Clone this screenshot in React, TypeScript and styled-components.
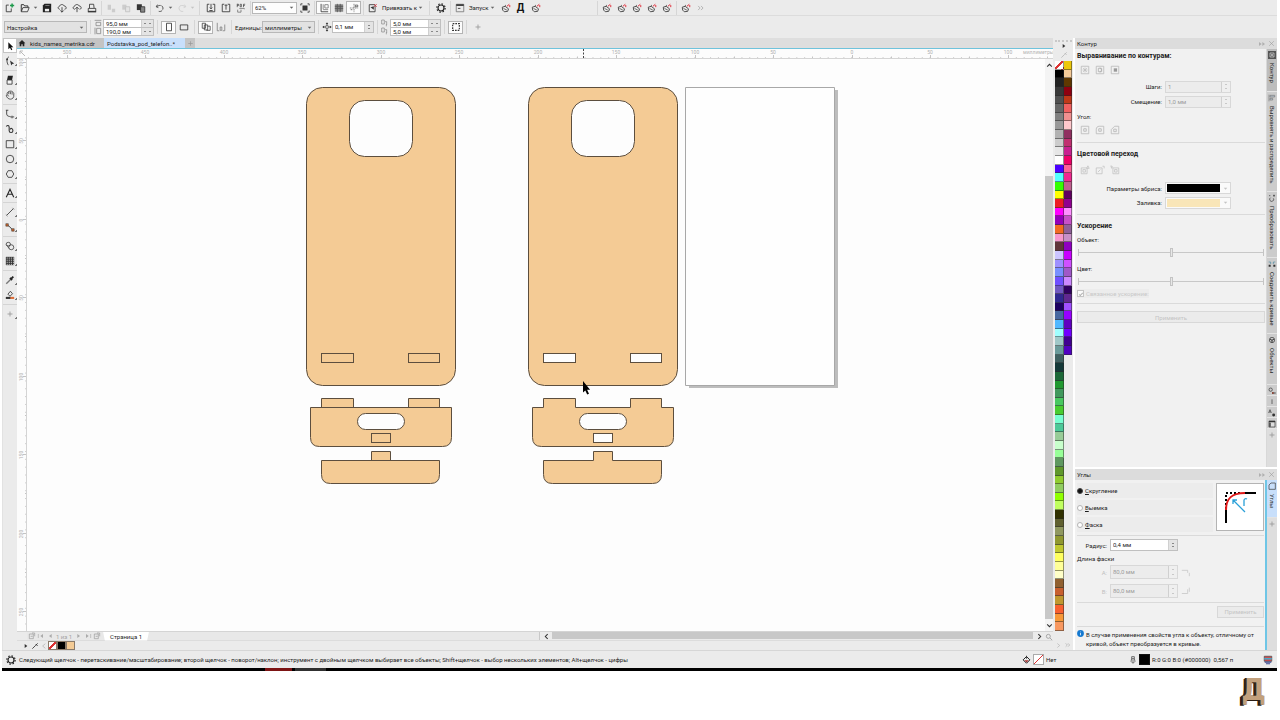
import React from "react";
import styled, { createGlobalStyle, css } from "styled-components";

const Global = createGlobalStyle`
  *, *::before, *::after { box-sizing: border-box; }
  body { margin: 0; background: #fff; }
  body, button, input, select {
    font-family: Roboto, "Open Sans", sans-serif;
    font-size: 6px;
    line-height: 9px;
    color: #1c1c1c;
  }
  button, input, select { margin: 0; padding: 0; border: 0; border-radius: 0; background: none; }
  button { cursor: pointer; }
`;

/* ---------- icons ---------- */

const K = "#333";
const G = "#777";
const R = "#e0303c";

const art: Record<string, React.ReactNode> = {
  newDoc: <><path d="M4.500 2.500H1.500v8h6V6.500" stroke={K} /><path d="M6 3h5M8.500 .5v5" stroke="#1f9a4c" strokeWidth="1.800" /></>,
  open: <><path d="M1.500 10V2h3l1 1.500h4V5" stroke={K} strokeWidth="1.200" /><path d="M1.500 10.500L3.500 5.500h7.500l-2 5z" stroke={K} /></>,
  save: <><path d="M3 1h8v10H1V3z" fill="#222" /><path d="M4 3h5" stroke="#888" /><path d="M3.500 7h5v3h-5z" fill="#eee" /></>,
  cloudDown: <><path d="M3.500 7.500C1 7.500.5 4.500 3 4 3.500 1.500 7.500 1 8.500 3.500 11.500 3.500 12 7.500 9 7.500" stroke={K} /><path d="M6 5v6M4 9l2 2 2-2" stroke={K} /></>,
  cloudUp: <><path d="M3.500 7.500C1 7.500.5 4.500 3 4 3.500 1.500 7.500 1 8.500 3.500 11.500 3.500 12 7.500 9 7.500" stroke={K} /><path d="M6 11V5M4 7l2-2 2 2" stroke={K} /></>,
  print: <><path d="M3 6V1.500h5l.5 4.500M1.500 6.500h9v3.500h-9z" stroke={K} /><path d="M1 10.500h10" stroke={K} strokeWidth="1.500" /></>,
  cut: <><path d="M2 2h4v6H2zM7 7h4v4H7z" fill="#ccc" /></>,
  copy: <><path d="M1.500 2h5v6h-5z" fill="#ccc" /><path d="M5.500 4.500h5v6h-5z" fill="#e4e4e4" stroke="#c0c0c0" /></>,
  paste: <><path d="M1 1.500h6v7H1z" fill={K} /><path d="M5.500 4.500h5v6.500h-5z" fill="#888" stroke={K} /></>,
  undo: <><path d="M3 2L1.500 4.500 4 5.500" stroke={K} /><path d="M2 4.500C6 1.500 10 3 9.500 7 9 10 6 10.500 4.500 10" stroke={K} strokeDasharray="5 1.200" /></>,
  redo: <><path d="M9 2l1.500 2.500L8 5.500" stroke="#ccc" /><path d="M10 4.500C6 1.500 2 3 2.500 7 3 10 6 10.500 7.500 10" stroke="#ccc" /></>,
  importI: <><path d="M4 1.500H1.500v9h9v-9H8" stroke={K} /><path d="M6 1v6M4.500 5.500L6 7l1.500-1.500M4 9h4" stroke={K} /></>,
  exportI: <><path d="M4 1.500H1.500v9h9v-9H8" stroke={K} /><path d="M6 8V2M4.500 3.500L6 2l1.500 1.500" stroke={K} /></>,
  pdf: <><path d="M1.500 1v4M1.500 1.500H3v1.500H1.500M5 1.500v3h1.500v-3zM9 5V1.500h2M9 3h1.500" stroke={K} strokeWidth=".8" /><path d="M4 6.500h6v1M2 8v3h4V8" stroke={G} /></>,
  full: <><path d="M3 3h6v6H3z" fill={K} /><path d="M1 3V1h2M9 1h2v2M11 9v2H9M3 11H1V9" stroke={K} /></>,
  rulers: <><path d="M2.500 1v9.500H11" stroke={K} /><path d="M5 1.500v6M7 2h4v4H7zM5 8h6" stroke={G} /></>,
  gridI: <><path d="M1 1.500h10v9H1z" fill="#888" /><path d="M1 4h10M1 6.500h10M4 1v10M7.500 1v10" stroke="#555" /></>,
  guides: <><path d="M6 1v10M1 6h10" stroke={G} strokeDasharray="2 1" /><path d="M7.500 2.500h3v2h-3zM2 8h2" stroke={K} strokeWidth=".8" /></>,
  snapOff: <><path d="M1.500 2h7v8.500h-7z" stroke={K} /><path d="M3 5l4 3V4z" fill={K} /><path d="M7.500 1.500l3 3M10.500 1.500l-3 3" stroke={R} /></>,
  gear: <><circle cx="6" cy="6" r="3.600" stroke="#222" strokeWidth="1.400" /><circle cx="6" cy="6" r="5" stroke="#222" strokeWidth="1.400" strokeDasharray="1.800 2.127" /></>,
  launch: <><path d="M1.500 1.500h9v9h-9z" stroke={G} /><path d="M1.500 2.500h9" stroke={K} strokeWidth="2" /><path d="M3.500 6.500h3" stroke={K} /></>,
  macro: <><path d="M1.500 5l3.500-1 4 3-1 3-4 .5-2-2z" stroke={K} /><path d="M3 6.500l4 2M4.500 3.500l1.500-1" stroke={K} strokeWidth=".8" /><path d="M7 4l3-2.500M10.500 2.500v2.500" stroke={R} strokeWidth="1.200" /></>,
  more: <path d="M2.500 3.500L5 6 2.500 8.500M6 3.500L8.500 6 6 8.500" stroke="#aaa" />,
  width: <><path d="M1 2h10M3 5h7v5H3z" stroke={G} /></>,
  height: <><path d="M1.500 1v10M4 2h6v8H4z" stroke={G} /></>,
  portrait: <path d="M3 1.500h6v9H3z" stroke={K} />,
  landscape: <path d="M1.500 3.500h9v6h-9z" stroke={K} />,
  pages: <><path d="M1.500 1.500h4v6h-4zM4 3.500h4v6H4zM8 5h3v5H6.500" stroke={K} strokeWidth=".9" /></>,
  pageOne: <><path d="M1.500 1v9.500H4M5 6h2v4H5zM10.500 3v7.500H8" stroke={G} strokeWidth=".9" /></>,
  nudge: <><path d="M6 1v10M1 6h10" stroke={K} /><path d="M4.500 2.500L6 .5l1.500 2M4.500 9.500L6 11.500l1.500-2M2.500 4.500L.5 6l2 1.500M9.500 4.500l2 1.500-2 1.500" fill={K} /><path d="M4.500 4.500h3v3h-3z" fill="#eee" stroke={K} strokeWidth=".6" /></>,
  dupX: <><path d="M1 1.500h4v6H1zM6 4h2.500v5M8 11V8" stroke={G} strokeWidth=".9" /></>,
  bounds: <path d="M2 2h8v8H2z" stroke={K} strokeWidth="1.400" strokeDasharray="2 1.200" />,
  plus: <path d="M6 3v6M3 6h6" stroke="#999" />,
  pick: <path d="M4 1.500v8.500l2-2 1.500 3 1.300-.7-1.500-2.800H10z" fill="#111" />,
  shape: <><path d="M4.500 1C1.500 3 2 8 4 11" stroke={K} /><path d="M1.500 3h2v2h-2zM6 5.500l5 3.500-2.300.5L7.500 11.500z" fill={K} /></>,
  crop: <><path d="M3.500 1h6l-1 5H2.500z" fill="#222" /><path d="M2.500 6h6v5h-6z" stroke={K} fill="#f5f5f5" /></>,
  pan: <><path d="M2.500 6V3.500M4.500 5V2M6.500 5V2M8.500 5.500V2.500M10.500 6C11 9 9 11 6.500 11 4 11 2 9 1.500 6.500c2-1 3 .5 3 1M2.500 3.500C5 .5 9 .5 10.500 4v2" stroke={K} strokeWidth=".9" /></>,
  freehand: <><path d="M1 1.500h3M2 1.500V6c0 3 3 2.500 5 3.500h4" stroke={K} /><path d="M7.500 8h2v3h-2z" fill={G} /></>,
  artistic: <path d="M1.500 3C3 1 5 1.500 5 4v4c0 3 4.500 3 4.500 0S6.500 4.500 6.500 6.500" stroke={K} strokeWidth="1.300" />,
  rect: <path d="M1.500 2h9v8.500h-9z" stroke={K} />,
  ellipse: <circle cx="6" cy="6" r="4.500" stroke={K} />,
  polygon: <path d="M3.800 2h4.400l2.300 4-2.300 4H3.800L1.500 6z" stroke={K} />,
  text: <path d="M1.500 11L6 1.500 10.500 11M3 7.500h6" stroke="#222" strokeWidth="1.300" />,
  dimension: <><path d="M2 10l8-8" stroke={K} /><path d="M1 9l2 2M9 1l2 2" stroke={G} /></>,
  connector: <><path d="M2.500 3.500L6 6l3 3.500" stroke={K} /><path d="M1 2h3v3H1zM8 8h3v3H8z" fill="#c8642c" stroke={K} strokeWidth=".6" /></>,
  blend: <><ellipse cx="4" cy="3.800" rx="2.600" ry="2.200" stroke={K} strokeWidth=".9" /><circle cx="7.500" cy="7.500" r="3" stroke={K} strokeWidth=".9" /><path d="M1.500 4.500l3.500 4.500" stroke={K} strokeWidth=".8" /></>,
  mesh: <><path d="M1 1h10v10H1z" fill="#333" /><path d="M2 2.500h9M2 5h9M2 7.500h9M2 10h9" stroke="#eee" strokeDasharray="1.200 1.300" strokeWidth="1.200" /></>,
  dropper: <><path d="M1.500 10.500L7 5" stroke={G} strokeWidth="1.600" /><path d="M6 3.500l2.500 2.500M7 5l3-3" stroke="#222" strokeWidth="2.200" /></>,
  fill: <><path d="M3.500 5L6.500 1.500 9 4.500 6 7.500z" stroke={K} /><path d="M1 9.500h6" stroke={K} strokeWidth="2.500" /><path d="M6.500 9.500H11" stroke="#dd6b35" strokeWidth="2.500" /></>,
  home: <path d="M1 6.500L6 1.500l5 5H9.500V11H7V8H5v3H2.500V6.500z" fill="#222" />,
  contour1: <><path d="M1.500 1.500h9v9h-9z" stroke="#bbb" /><path d="M3.500 3.500l5 5M8.500 3.500l-5 5M6 3v6M3 6h6" stroke="#bbb" strokeWidth=".8" /></>,
  contour2: <><path d="M1.500 1.500h9v9h-9z" stroke="#bbb" /><path d="M4 4h4v4H4zM6 3l2 3-2 3" stroke="#b0b0b0" /></>,
  contour3: <><path d="M1.500 1.500h9v9h-9z" stroke="#bbb" /><path d="M4.500 4h4v4h-4z" fill="#999" /></>,
  corner1: <><path d="M1.500 1.500h9v9h-9z" stroke="#bbb" /><path d="M4.500 4.500h3v3h-3z" stroke="#b5b5b5" /></>,
  corner2: <><path d="M1.500 10.500V5C1.500 3 3 1.500 5 1.500h5.500v9z" stroke="#bbb" /><path d="M4.500 4.500h3v3h-3z" stroke="#b5b5b5" /></>,
  corner3: <><path d="M1.500 10.500V5.500l4-4h5v9z" stroke="#bbb" /><path d="M4.500 5h3v3h-3z" stroke="#b5b5b5" /></>,
  color1: <><path d="M1.500 3.500h7v7h-7zM3.500 5.500h3v3h-3zM8 4l1.500-3L11 4z" stroke="#c4c4c4" /></>,
  color2: <><path d="M1.500 3.500h7v7h-7zM3.500 8.500l3-3M9 1.500h2V4" stroke="#c4c4c4" /></>,
  color3: <><path d="M3.500 3.500h7v7h-7zM5.500 5.500h3v3h-3zM1 1l2 1-1 2z" stroke="#c4c4c4" /></>,
  dockContour: <><path d="M0 0h12v12H0z" fill="#555" /><path d="M3 3h6v6H3z" stroke="#ddd" /><path d="M5 5h2v2H5z" fill="#fff" /></>,
  dockAlign: <><path d="M1.500 1v10M3 2h7v2.500H3zM3 6.500h4V9H3z" stroke={G} fill="#b8c4d0" /></>,
  dockTransform: <><path d="M4 5.500a3 3 0 1 0 4 1" stroke={K} /><path d="M1.500 2.500h2M9 1v3M7.500 2.500h3" stroke={K} /></>,
  dockJoin: <><path d="M1 3h3v3M8 6V3h3" stroke="#4a88a0" /><path d="M1 7h3v3H1zM8 7h3v3H8z" fill={K} /></>,
  dockObjects: <><circle cx="6" cy="6" r="4" stroke={K} /><path d="M3 4.500l3 2 3-2M6 6.500V10" stroke={K} strokeWidth="1.500" /></>,
  dockFill: <><circle cx="4" cy="4" r="2.500" stroke={K} /><path d="M6 9h3" stroke="#8c4a3c" strokeWidth="3" /><path d="M8.500 7.500h3v3h-3z" fill="#888" /></>,
  dockLine: <path d="M6 2v7" stroke={K} />,
  dockText: <><path d="M1 6l2-5 2 5M2 4.500h2" stroke={K} /><circle cx="8.500" cy="9" r="2.200" fill={K} /></>,
  dockTable: <><path d="M1.500 1.500h9v9h-9z" stroke={K} fill="#ddd" /><path d="M1.500 2.500h9M3 4v6" stroke={K} strokeWidth="2" /></>,
  dockCorner: <path d="M1.500 11V4.500l3-3h6.500v9.500z" stroke={K} />,
  bevelA: <path d="M1 4h7v3M10 7v4" stroke="#c8c8c8" />,
  bevelB: <path d="M1 9h7V4M10 2v5" stroke="#c8c8c8" />,
  lock: <path d="M2 10L6 3l4 7z" fill="#b0b0b0" />,
  info: <><circle cx="6" cy="6" r="5.800" fill="#1579d0" /><path d="M6 5v4M6 2.800v1" stroke="#fff" strokeWidth="1.300" /></>,
  bucket: <><path d="M1.500 6.500L6 2l4.500 4.500L6 11z" stroke="#222" strokeWidth="1.300" /><path d="M3 7h6L6 10z" fill="#a33" /><path d="M6 1v4" stroke="#222" /></>,
  pen: <><path d="M4 1h4v3H4zM4 4L3 8l3 3 3-3-1-4M6 5v5" stroke={K} /></>,
  monitor: <><path d="M1.500 1.500h9v6h-9z" fill="#d84848" stroke="#555" /><path d="M1.500 4.500h9" stroke="#4aa8c8" strokeWidth="2" /><path d="M2 8.500h8M3.500 10.500h5" stroke="#3b4a90" strokeWidth="1.400" /></>,
  zoomI: <><circle cx="5" cy="5" r="3" stroke="#888" /><path d="M7.500 7.500l3 3" stroke="#888" /></>,
  first: <><path d="M2 3v6" stroke="#aaa" /><path d="M9 3L5 6l4 3z" fill="#aaa" /></>,
  prev: <path d="M8.500 3l-4 3 4 3z" fill="#aaa" />,
  next: <path d="M3.500 3l4 3-4 3z" fill="#aaa" />,
  last: <><path d="M10 3v6" stroke="#aaa" /><path d="M3 3l4 3-4 3z" fill="#aaa" /></>,
  addPage: <><path d="M2 3h6v7H2z" stroke="#999" /><path d="M6 1.500h4v5M4 6.500h3" stroke="#999" /></>,
  flyout: <path d="M4 3l4 3-4 3z" fill="#333" />,
  picker: <path d="M2 10l5-5M7 3l3 3M7 5l3-3" stroke="#333" strokeWidth="1.300" />,
  pickerGrey: <path d="M2 10l5-5M7 3l3 3M7 5l3-3" stroke="#bbb" strokeWidth="1.300" />,
  chevL: <path d="M8 2.500L4 6l4 3.500" stroke="#aaa" />,
  chevR: <path d="M4 2.500L8 6l-4 3.500" stroke="#aaa" />,
  arrL: <path d="M8 2L4 6l4 4" stroke="#333" strokeWidth="1.800" />,
  arrR: <path d="M4 2l4 4-4 4" stroke="#333" strokeWidth="1.800" />,
  arrU: <path d="M2 8l4-4 4 4" stroke="#333" strokeWidth="1.800" />,
  arrD: <path d="M2 4l4 4 4-4" stroke="#333" strokeWidth="1.800" />,
  collapse: <path d="M1.500 3v6l4-3zM6.500 3v6l4-3z" fill="#b0b0b0" />,
  close: <path d="M2 2l8 8M10 2l-8 8" stroke="#999" />,
  caret: <path d="M3 4.500h6L6 8z" fill="#666" />,
  caretGrey: <path d="M3 4.500h6L6 8z" fill="#c4c4c4" />,
};

const Svg = styled.svg`
  display: block;
  flex: none;
`;

function Icon({ name, size = 9 }: { name: string; size?: number }) {
  return (
    <Svg width={size} height={size} viewBox="0 0 12 12" fill="none" aria-hidden="true">
      {art[name]}
    </Svg>
  );
}

/* ---------- frame ---------- */

const Page = styled.div`
  min-height: 100vh;
  display: flex;
  flex-direction: column;
`;

const Window = styled.main`
  flex: 1;
  display: flex;
  flex-direction: column;
  margin: 0 3px 0 2px;
  background: #ebebeb;
`;

const Toolbar = styled.div<{ $h: number }>`
  display: flex;
  align-items: center;
  height: ${(p) => p.$h}px;
  overflow: hidden;
`;

const PropertyBar = styled(Toolbar)`
  border-top: 1px solid #dcdcdc;
  padding-left: 2px;
`;

const IconButton = styled.button<{ $boxed?: boolean }>`
  display: flex;
  align-items: center;
  justify-content: center;
  flex: none;
  width: 15px;
  height: 13px;
  ${(p) => p.$boxed && css`
    background: #fcfcfc;
    box-shadow: inset 0 0 0 1px #b4b4b4;
  `}
`;

const CaretButton = styled.button`
  display: flex;
  align-items: center;
  justify-content: center;
  flex: none;
  width: 7px;
  height: 13px;
`;

const MenuButton = styled.button<{ $w: number }>`
  display: flex;
  align-items: center;
  justify-content: space-between;
  flex: none;
  width: ${(p) => p.$w}px;
  padding: 0 2px;
  white-space: nowrap;
`;

const Letter = styled.b`
  font-size: 10px;
  line-height: 12px;
  color: #111;
`;

const Sep = styled.i<{ $w?: number }>`
  flex: none;
  width: ${(p) => p.$w ?? 4}px;
  height: 14px;
  background: linear-gradient(#d6d6d6, #d6d6d6) center / 1px 100% no-repeat;
`;

const Spacer = styled.i<{ $w: number }>`
  flex: none;
  width: ${(p) => p.$w}px;
`;

const SelectBox = styled.span<{ $w: number; $white?: boolean }>`
  display: flex;
  align-items: center;
  flex: none;
  width: ${(p) => p.$w}px;
  height: 12px;
  padding: 0 1px 0 2px;
  border: 1px solid #b8b8b8;
  background: ${(p) => (p.$white ? "#fdfdfd" : "#e2e2e2")};
  select {
    flex: 1;
    min-width: 0;
    appearance: none;
    outline: 0;
  }
`;

function Select({ label, value, w, white }: { label: string; value: string; w: number; white?: boolean }) {
  return (
    <SelectBox $w={w} $white={white}>
      <select aria-label={label} defaultValue={value}>
        <option>{value}</option>
      </select>
      <Icon name="caret" size={7} />
    </SelectBox>
  );
}

const Field = styled.span<{ $w: number; $h: number; $off?: boolean }>`
  display: flex;
  flex: none;
  width: ${(p) => p.$w}px;
  height: ${(p) => p.$h}px;
  border: 1px solid ${(p) => (p.$off ? "#d8d8d8" : "#c0c0c0")};
  background: ${(p) => (p.$off ? "#ececec" : "#fff")};
  input {
    flex: 1;
    min-width: 0;
    padding: 0 2px;
    line-height: ${(p) => p.$h - 2}px;
    outline: 0;
    color: ${(p) => (p.$off ? "#9a9a9a" : "#1c1c1c")};
  }
`;

const Stepper = styled.i<{ $flat?: boolean; $off?: boolean }>`
  display: flex;
  flex-direction: ${(p) => (p.$flat ? "row" : "column")};
  align-items: center;
  justify-content: space-evenly;
  width: ${(p) => (p.$flat ? 12 : 9)}px;
  border-left: 1px solid #d0d0d0;
  background: ${(p) => (p.$off ? "#efefef" : "#e4e4e4")};
  &::before, &::after {
    content: "";
    width: 2px;
    height: 1px;
    background: ${(p) => (p.$off ? "#c8c8c8" : "#888")};
  }
`;

function NumberField({ id, label, value, w, h, off, flat }: {
  id: string; label?: string; value: string; w: number; h: number; off?: boolean; flat?: boolean;
}) {
  return (
    <Field $w={w} $h={h} $off={off}>
      <input id={id} aria-label={label} type="text" defaultValue={value} disabled={off} />
      <Stepper $flat={flat} $off={off} />
    </Field>
  );
}

const Stack = styled.div`
  display: flex;
  flex-direction: column;
  flex: none;
`;

const StackRow = styled.div`
  display: flex;
  align-items: center;
  gap: 1px;
  height: 8px;
`;

const UnitLabel = styled.span`
  flex: none;
  width: 27px;
  white-space: nowrap;
`;

/* ---------- workspace ---------- */

const Body = styled.div`
  flex: 1;
  display: flex;
  min-height: 0;
`;

const Toolbox = styled.nav`
  display: flex;
  flex-direction: column;
  flex: none;
  width: 15px;
  border-left: 1px solid #e2e2e2;
`;

const Tool = styled.button<{ $active?: boolean }>`
  display: flex;
  align-items: center;
  justify-content: center;
  width: 14px;
  height: 15px;
  background: linear-gradient(135deg, transparent 50%, #777 50%) 12px 11px / 2px 2px no-repeat;
  ${(p) => p.$active && css`
    background: #fff;
    box-shadow: inset 0 0 0 1px #c4c4c4;
  `}
`;

const ToolSep = styled.i`
  height: 4px;
  background: linear-gradient(#d4d4d4, #d4d4d4) center / 100% 1px no-repeat;
`;

const DocumentArea = styled.section`
  flex: 1;
  min-width: 0;
  display: flex;
  flex-direction: column;
`;

const TabStrip = styled.div`
  display: flex;
  height: 10px;
  background: #dedede;
`;

const HomeTab = styled.button`
  display: flex;
  align-items: center;
  justify-content: center;
  width: 10px;
  background: #c4c4c4;
`;

const DocTab = styled.button<{ $active?: boolean; $w: number }>`
  width: ${(p) => p.$w}px;
  padding: 0 3px;
  text-align: left;
  white-space: nowrap;
  background: ${(p) => (p.$active ? "#c8dffb" : "#c4c4c4")};
`;

const RulerTop = styled.div`
  display: flex;
  height: 11px;
  overflow: hidden;
  border-top: 1px solid #6fc3dc;
  border-bottom: 1px solid #d4d4d4;
  background: #fcfcfc;
`;

const CanvasRow = styled.div`
  flex: 1;
  min-height: 0;
  display: flex;
  overflow: hidden;
`;

const RulerLeft = styled.div`
  flex: none;
  width: 10px;
  overflow: hidden;
  border-right: 1px solid #d4d4d4;
  background: #fcfcfc;
`;

const Canvas = styled.div`
  flex: 1;
  min-width: 0;
  overflow: hidden;
  background: #fdfdfd;
`;

const VScroll = styled.div`
  flex: none;
  display: flex;
  flex-direction: column;
  width: 8px;
  background: #f4f4f4;
`;

const ScrollButton = styled.button<{ $w: number }>`
  display: flex;
  align-items: center;
  justify-content: center;
  flex: none;
  width: ${(p) => p.$w}px;
  height: 9px;
`;

const VButton = styled(ScrollButton)`
  height: 12px;
`;

const Track = styled.i`
  flex: 105;
`;

const VThumb = styled.i`
  flex: 442;
  background: #c8c8c8;
`;

const PageBar = styled.div`
  display: flex;
  height: 9px;
  border-top: 1px solid #d4d4d4;
  padding-left: 10px;
`;

const PageNav = styled.div`
  display: flex;
  align-items: center;
  flex: none;
  width: 513px;
  color: #aaa;
  border-right: 1px solid #c8c8c8;
  background: #e8e8e8;
`;

const PageNavButton = styled.button`
  display: flex;
  justify-content: center;
  width: 9px;
`;

const PageCount = styled.span`
  width: 20px;
  color: #a4a4a4;
  text-align: center;
`;

const PageTab = styled.button`
  height: 9px;
  width: 46px;
  margin-left: 2px;
  background: #fff;
  white-space: nowrap;
  clip-path: polygon(0 0, 100% 0, 96% 100%, 4% 100%);
`;

const HThumb = styled.i`
  flex: 1;
  height: 7px;
  background: #c8c8c8;
`;

const ColorBar = styled.div`
  display: flex;
  align-items: center;
  height: 10px;
  padding-left: 4px;
  border-top: 1px solid #dcdcdc;
`;

const ColorBarButton = styled.button`
  display: flex;
  justify-content: center;
  width: 9px;
`;

const DocSwatch = styled.button<{ $c: string }>`
  width: 9px;
  height: 9px;
  background: ${(p) => p.$c};
  box-shadow: inset 0 0 0 1px #8a7a6a;
`;

/* ---------- palette ---------- */

const Palette = styled.aside`
  flex: none;
  display: flex;
  flex-direction: column;
  width: 20px;
  padding: 2px 1px 0 2px;
`;

const PaletteTop = styled.div`
  display: flex;
  flex-direction: column;
  align-items: center;
  gap: 1px;
  height: 21px;
  border-top: 2px dotted #c8c8c8;
`;

const Swatches = styled.div`
  flex: 1;
  min-height: 0;
  display: grid;
  grid-template-columns: 1fr 1fr;
`;

const SwatchColumn = styled.div`
  display: grid;
  min-height: 0;
  grid-template-rows: repeat(66, minmax(0, 1fr));
`;

const Swatch = styled.button<{ $c: string }>`
  min-height: 0;
  background: ${(p) => p.$c};
  border: solid rgba(40, 40, 40, 0.5);
  border-width: 0 1px 1px 0;
`;

const PaletteFoot = styled.div`
  display: flex;
  align-items: flex-end;
  justify-content: space-between;
  height: 19px;
  padding-bottom: 1px;
`;

/* ---------- dockers ---------- */

const Dockers = styled.aside`
  flex: none;
  display: flex;
  flex-direction: column;
  width: 204px;
  border-left: 2px solid #fff;
`;

const Docker = styled.section<{ $grow?: boolean }>`
  flex: ${(p) => (p.$grow ? 1 : "none")};
  display: flex;
  flex-direction: column;
  border-bottom: ${(p) => (p.$grow ? "2px solid #fff" : "0")};
`;

const DockerHead = styled.header`
  display: flex;
  align-items: center;
  gap: 2px;
  height: 11px;
  padding: 0 2px;
  background: #dcdcdc;
  span { flex: 1; }
`;

const DockerMain = styled.div`
  flex: 1;
  display: flex;
`;

const DockerBody = styled.div<{ $line?: boolean }>`
  flex: 1;
  min-width: 0;
  padding: 0 1px 0 2px;
  background: #f1f1f1;
  border-right: ${(p) => (p.$line ? "2px solid #6fc6e6" : "1px solid #d8d8d8")};
`;

const Line = styled.div<{ $h?: number; $align?: string; $gap?: number }>`
  display: flex;
  align-items: center;
  justify-content: ${(p) => p.$align ?? "flex-start"};
  gap: ${(p) => p.$gap ?? 3}px;
  height: ${(p) => p.$h ?? 15}px;
`;

const Heading = styled.h2`
  margin: 0;
  font-size: 7px;
  line-height: 9px;
  font-weight: 700;
`;

const Rule = styled.hr`
  height: 1px;
  margin: 0;
  border: 0;
  background: #dadada;
`;

const FormLabel = styled.label<{ $w?: number; $off?: boolean }>`
  width: ${(p) => (p.$w ? `${p.$w}px` : "auto")};
  text-align: right;
  white-space: nowrap;
  color: ${(p) => (p.$off ? "#c0c0c0" : "#1c1c1c")};
`;

const ColorSelect = styled.button<{ $c: string }>`
  display: flex;
  align-items: center;
  justify-content: space-between;
  width: 66px;
  height: 12px;
  padding: 1px;
  border: 1px solid #d8d8d8;
  background: #fafafa;
  &::before {
    content: "";
    width: 53px;
    height: 8px;
    background: ${(p) => p.$c};
  }
`;

const SliderBox = styled.div`
  display: flex;
  align-items: center;
  width: 100%;
  height: 7px;
  margin: 0 1px;
  border: solid #c4c4c4;
  border-width: 0 1px;
`;

const Slider = styled.input`
  width: 100%;
  height: 9px;
  appearance: none;
  &::-webkit-slider-runnable-track {
    height: 1px;
    background: #c8c8c8;
  }
  &::-webkit-slider-thumb {
    appearance: none;
    width: 3px;
    height: 9px;
    margin-top: -4px;
    background: #e8e8e8;
    border: 1px solid #c4c4c4;
  }
`;

const CheckLabel = styled.label`
  display: flex;
  align-items: center;
  gap: 2px;
  color: #c8c8c8;
  background: #ececec;
`;

const Check = styled.input`
  appearance: none;
  display: flex;
  align-items: center;
  justify-content: center;
  width: 7px;
  height: 7px;
  border: 1px solid #c4c4c4;
  background: #fafafa;
  &:checked::after {
    content: "";
    width: 4px;
    height: 2px;
    border: solid #b0b0b0;
    border-width: 0 0 1px 1px;
    transform: rotate(-45deg);
  }
`;

const PushButton = styled.button<{ $w?: number }>`
  width: ${(p) => (p.$w ? `${p.$w}px` : "100%")};
  height: 12px;
  color: #c4c4c4;
  background: #ebebeb;
  border: 1px solid #d8d8d8;
`;

const CornerTop = styled.div`
  display: flex;
  justify-content: space-between;
  padding: 3px 0;
`;

const RadioList = styled.div`
  display: flex;
  flex-direction: column;
  gap: 2px;
  flex: 1;
  margin-right: 3px;
`;

const RadioLabel = styled.label`
  display: flex;
  align-items: center;
  gap: 2px;
  height: 15px;
  background: #ececec;
  u { text-underline-offset: 1px; }
`;

const Radio = styled.input`
  appearance: none;
  width: 6px;
  height: 6px;
  border: 1px solid #b4b4b4;
  border-radius: 50%;
  background: #fff;
  &:checked { background: #111; border-color: #444; }
`;

const Preview = styled.div`
  width: 48px;
  height: 48px;
  border: 1px solid #b4b4b4;
  background: #fff;
`;

const Info = styled.p`
  display: flex;
  gap: 2px;
  margin: 3px 0 2px;
`;

const SideTabs = styled.nav`
  flex: none;
  width: 10px;
  display: flex;
  flex-direction: column;
  align-items: stretch;
  background: #dedede;
`;

const SideTab = styled.button<{ $h: number; $active?: boolean; $open?: boolean }>`
  display: flex;
  align-items: center;
  justify-content: flex-start;
  gap: 4px;
  height: ${(p) => p.$h}px;
  padding: 2px 0 0;
  writing-mode: vertical-rl;
  white-space: nowrap;
  background: ${(p) => (p.$active ? "#c8dffb" : p.$open ? "#bdbdbd" : "#cccccc")};
  border-bottom: 1px solid #e4e4e4;
`;

const SideAdd = styled.button`
  display: flex;
  align-items: center;
  justify-content: center;
  height: 12px;
`;

/* ---------- status bar ---------- */

const StatusBar = styled.footer`
  display: flex;
  align-items: center;
  height: 18px;
  padding: 0 4px;
  border-top: 1px solid #d6d6d6;
  white-space: nowrap;
`;

const StatusHint = styled.span`
  flex: 1;
  min-width: 0;
  overflow: hidden;
  padding-left: 3px;
`;

const StatusGroup = styled.div<{ $w: number }>`
  display: flex;
  align-items: center;
  flex: none;
  gap: 2px;
  width: ${(p) => p.$w}px;
`;

const StatusSwatch = styled.i<{ $none?: boolean }>`
  width: 11px;
  height: 11px;
  border: 1px solid ${(p) => (p.$none ? "#aaa" : "#111")};
  background: ${(p) => (p.$none ? "linear-gradient(135deg, #fff 45%, #d33 45%, #d33 55%, #fff 55%)" : "#000")};
`;

const Progress = styled.div`
  display: flex;
  height: 3px;
  background: #000;
  padding-left: 263px;
  gap: 3px;
`;

const ProgressPart = styled.i<{ $w: number; $c: string }>`
  width: ${(p) => p.$w}px;
  background: ${(p) => p.$c};
`;

const Brand = styled.div`
  display: flex;
  justify-content: flex-end;
  height: 49px;
  padding: 1px 14px 0 0;
`;

const BrandLetter = styled.strong`
  font-family: "DejaVu Sans Condensed", "DejaVu Sans", sans-serif;
  font-size: 31px;
  line-height: 34px;
  color: #c2a07c;
  text-shadow: -1px 0 #33241a, -2px 0 #33241a, -3px 1px #2a1c12;
`;

/* ---------- data ---------- */

const leftSwatches = [
  "linear-gradient(135deg, #fff 42%, #d33 42%, #d33 58%, #fff 58%)", "#000", "#222", "#383838", "#505050", "#666", "#808080",
  "#999", "#b2b2b2", "#ccc", "#e6e6e6", "#fff", "#4b00ff", "#55ffff", "#33ff00", "#ffff00", "#ed1c24", "#ff00ff", "#9400b8",
  "#f26a22", "#f797cc", "#60353a", "#ccc5ff", "#9e90ff", "#7890ff", "#7050ff", "#7058c0", "#302890", "#1c0060", "#4868a0",
  "#50b8ff", "#a0ffff", "#a0c8c8", "#6a9a9a", "#3f6060", "#143838", "#1c6838", "#209830", "#40985c", "#48c860", "#48cc30",
  "#78ffd0", "#4cc898", "#98cc98", "#c8ffcc", "#98ff98", "#5f9860", "#60982c", "#90cc30", "#90cc60", "#90ff00", "#c0ff60",
  "#303000", "#606030", "#909860", "#909830", "#c0c830", "#ffff60", "#ffff98", "#ffffc8", "#906030", "#c86030", "#c09830",
  "#f86030", "#f89838", "#f89860",
];

const rightSwatches = [
  "#ecc80c", "#f5cb98", "#603800", "#900010", "#c03818", "#f06060", "#f09090", "#ffc8cc", "#903060", "#c03070", "#c82090",
  "#ee0068", "#ff6098", "#f02890", "#c06090", "#600060", "#900090", "#ff90ff", "#c850c8", "#906098", "#c890c8", "#9000c0",
  "#c800ff", "#d050ff", "#a058c8", "#cc88ff", "#300060", "#602890", "#a050ff", "#9800ff", "#6000c0", "#7000ff", "#400090",
  "#5000c0",
];

const toolGroups = [
  ["pick", "shape"], ["crop", "pan"], ["freehand", "artistic", "rect", "ellipse", "polygon"], ["text"],
  ["dimension", "connector"], ["blend", "mesh"], ["dropper", "fill"],
];

const topMarks = [500, 450, 400, 350, 300, 250, 200, 150, 100, 50, 0, 50, 100];
const leftMarks = [100, 50, 0, 50, 100, 150, 200, 250];

/* ---------- parts ---------- */

const Icons = ({ names, boxed = [] }: { names: string[]; boxed?: string[] }) => (
  <>
    {names.map((n, i) => (
      <IconButton key={i} aria-label={n} $boxed={boxed.includes(n)}><Icon name={n} size={10} /></IconButton>
    ))}
  </>
);

const Caret = ({ grey }: { grey?: boolean }) => (
  <CaretButton aria-label="list"><Icon name={grey ? "caretGrey" : "caret"} size={7} /></CaretButton>
);

function StandardBar() {
  return (
    <Toolbar $h={15}>
      <Icons names={["newDoc", "open"]} /><Caret />
      <Icons names={["save", "cloudDown", "cloudUp", "print"]} /><Sep />
      <Icons names={["cut", "copy", "paste"]} /><Sep />
      <Icons names={["undo"]} /><Caret /><Icons names={["redo"]} /><Caret grey /><Sep $w={7} />
      <Icons names={["importI", "exportI", "pdf"]} /><Sep />
      <Select label="Масштаб" value="62%" w={45} white />
      <Icons names={["full"]} /><Sep />
      <Icons names={["rulers", "gridI", "guides"]} boxed={["rulers", "guides"]} /><Sep />
      <Icons names={["snapOff"]} />
      <MenuButton $w={46}>Привязать к <Icon name="caret" size={7} /></MenuButton><Sep $w={7} />
      <Icons names={["gear"]} /><Sep />
      <Icons names={["launch"]} />
      <MenuButton $w={31}>Запуск <Icon name="caret" size={7} /></MenuButton>
      <Icons names={["macro"]} />
      <IconButton><Letter>Д</Letter></IconButton>
      <Icons names={["macro"]} /><Spacer $w={52} /><Sep />
      <Icons names={["macro", "macro", "macro", "macro", "macro"]} /><Sep />
      <Icons names={["macro", "more"]} />
    </Toolbar>
  );
}

function Properties() {
  return (
    <PropertyBar $h={23}>
      <Select label="Размер страницы" value="Настройка" w={83} /><Sep $w={7} />
      <Stack>
        <StackRow><Icon name="width" size={8} /><NumberField id="pw" label="Ширина" value="95,0 мм" w={51} h={9} flat /></StackRow>
        <StackRow><Icon name="height" size={8} /><NumberField id="ph" label="Высота" value="190,0 мм" w={51} h={9} flat /></StackRow>
      </Stack>
      <Sep $w={7} />
      <Icons names={["portrait", "landscape"]} boxed={["portrait"]} /><Sep $w={7} />
      <Icons names={["pages", "pageOne"]} boxed={["pages"]} /><Sep $w={7} />
      <UnitLabel>Единицы:</UnitLabel>
      <Select label="Единицы" value="миллиметры" w={53} /><Sep $w={7} />
      <Icon name="nudge" size={10} />
      <NumberField id="nudge" label="Смещение" value="0,1 мм" w={42} h={12} /><Sep $w={7} />
      <Stack>
        <StackRow><Icon name="dupX" size={8} /><NumberField id="dx" label="Дубликат X" value="5,0 мм" w={51} h={9} flat /></StackRow>
        <StackRow><Icon name="dupX" size={8} /><NumberField id="dy" label="Дубликат Y" value="5,0 мм" w={51} h={9} flat /></StackRow>
      </Stack>
      <Sep $w={7} />
      <Icons names={["bounds"]} boxed={["bounds"]} /><Sep $w={7} />
      <Icons names={["plus"]} />
    </PropertyBar>
  );
}

function HorizontalRuler() {
  return (
    <Svg width={1036} height={10} viewBox="17 49 1036 10" fill="none">
      <path d="M20 51l5 5M20 54v-3h3" stroke="#bbb" />
      <path d="M28 57.500h1018" stroke="#d0d0d0" strokeDasharray="1 6.840" />
      {topMarks.map((m, i) => {
        const x = 67 + Math.round(i * 78.45);
        return (
          <g key={i}>
            <path d={`M${x + 0.5} 55v4M${x + 39.5} 56.500v2.500`} stroke="#c4c4c4" />
            <text x={x} y={54} fontSize={5} fill="#b0b0b0" textAnchor="middle">{m}</text>
          </g>
        );
      })}
      <text x={1023} y={54} fontSize={5} fill="#b4b4b4">миллиметры</text>
      <path d="M583.500 49v10" stroke="#444" strokeDasharray="2 1.500" />
    </Svg>
  );
}

function VerticalRuler() {
  return (
    <Svg width={10} height={572} viewBox="17 59 10 572" fill="none">
      <path d="M25.500 59v572" stroke="#d0d0d0" strokeDasharray="1 6.840" />
      {leftMarks.map((m, i) => {
        const y = 63 + Math.round(i * 78.45);
        return (
          <g key={i}>
            <path d={`M23 ${y - 0.5}h4M25 ${y + 38.5}h2`} stroke="#c4c4c4" />
            <text fontSize={5} fill="#b0b0b0" textAnchor="middle" transform={`translate(23 ${y}) rotate(-90)`}>{m}</text>
          </g>
        );
      })}
    </Svg>
  );
}

function Drawing() {
  const wood = "#f4cb95";
  return (
    <Svg width={1019} height={572} viewBox="27 59 1019 572" fill={wood} stroke="#5c4e3e">
      <path d="M689 90h149v298H689z" fill="#bdbdbd" stroke="none" />
      <path d="M685.500 87.500h149v298h-149z" fill="#fefefe" stroke="#a8a8a8" />
      {[0, 222].map((dx) => (
        <g key={dx} transform={`translate(${dx} 0)`}>
          <rect x="306.500" y="87.500" width="149" height="298" rx="16" />
          <rect x="349.500" y="100.500" width="63" height="56" rx="15" fill="#fdfdfd" />
          <rect x="321.500" y="353.500" width="32" height="9" fill={dx ? "#fdfdfd" : wood} />
          <rect x="408.500" y="353.500" width="31" height="9" fill={dx ? "#fdfdfd" : wood} />
          {dx === 0 ? (
            <>
              <path d="M321.500 398.500h32v9h-32zM408.500 398.500h31v9h-31z" />
              <path d="M310.500 407.500h141v30q0 9-9 9h-123q-9 0-9-9z" />
              <path d="M371.500 451.500h19v9h-19z" />
              <path d="M321.500 460.500h118v14q0 9-9 9h-100q-9 0-9-9z" />
            </>
          ) : (
            <>
              <path d="M310.500 407.500h11v-9h32v9h55v-9h31v9h12v30q0 9-9 9h-123q-9 0-9-9z" />
              <path d="M321.500 460.500h50v-9h19v9h49v14q0 9-9 9h-100q-9 0-9-9z" />
            </>
          )}
          <rect x="357.500" y="413.500" width="47" height="16" rx="8" fill="#fdfdfd" />
          <rect x="371.500" y="433.500" width="19" height="9" fill={dx ? "#fdfdfd" : wood} />
        </g>
      ))}
      <path d="M583 381v11.500l2.300-2 1.900 4 1.800-.8-1.900-3.900h3z" fill="#000" stroke="none" />
    </Svg>
  );
}

function ContourDocker() {
  return (
    <Docker $grow>
      <DockerHead><span>Контур</span><Icon name="collapse" size={8} /><Icon name="close" size={7} /></DockerHead>
      <DockerMain>
        <DockerBody>
          <Line><Heading>Выравнивание по контурам:</Heading></Line>
          <Line $h={11} $gap={0}><Icons names={["contour1", "contour2", "contour3"]} /></Line>
          <Line $h={4} />
          <Line><FormLabel $w={85} htmlFor="steps">Шаги:</FormLabel><NumberField id="steps" value="1" w={66} h={12} off /></Line>
          <Line><FormLabel $w={85} htmlFor="offset">Смещение:</FormLabel><NumberField id="offset" value="1,0 мм" w={66} h={12} off /></Line>
          <Line>Угол:</Line>
          <Line $h={11} $gap={0}><Icons names={["corner1", "corner2", "corner3"]} /></Line>
          <Line $h={7} /><Rule /><Line $h={4} />
          <Line><Heading>Цветовой переход</Heading></Line>
          <Line $gap={0}><Icons names={["color1", "color2", "color3"]} /></Line>
          <Line $h={4} />
          <Line $h={14}><FormLabel $w={85} htmlFor="outline">Параметры абриса:</FormLabel><ColorSelect id="outline" $c="#000"><Icon name="caretGrey" size={7} /></ColorSelect></Line>
          <Line><FormLabel $w={85} htmlFor="fillc">Заливка:</FormLabel><ColorSelect id="fillc" $c="#f9e6b8"><Icon name="caretGrey" size={7} /></ColorSelect></Line>
          <Line $h={4} /><Rule /><Line $h={4} />
          <Line><Heading>Ускорение</Heading></Line>
          <Line $h={11}><label htmlFor="accObj">Объект:</label></Line>
          <Line $h={14}><SliderBox><Slider id="accObj" type="range" disabled /></SliderBox></Line>
          <Line $h={4} />
          <Line $h={11}><label htmlFor="accCol">Цвет:</label></Line>
          <Line $h={14}><SliderBox><Slider id="accCol" type="range" disabled /></SliderBox></Line>
          <Line $h={11}><CheckLabel><Check type="checkbox" defaultChecked disabled />Связанное ускорение:</CheckLabel></Line>
          <Line $h={4} /><Rule /><Line $h={7} />
          <PushButton disabled>Применить</PushButton>
        </DockerBody>
        <SideTabs>
          <SideTab $h={43} $open><Icon name="dockContour" size={8} />Контур</SideTab>
          <SideTab $h={100}><Icon name="dockAlign" size={8} />Выровнять и распределить</SideTab>
          <SideTab $h={66}><Icon name="dockTransform" size={8} />Преобразовать</SideTab>
          <SideTab $h={76}><Icon name="dockJoin" size={8} />Соединить кривые</SideTab>
          <SideTab $h={51}><Icon name="dockObjects" size={8} />Объекты</SideTab>
          <SideTab $h={11} aria-label="fill"><Icon name="dockFill" size={8} /></SideTab>
          <SideTab $h={11} aria-label="line"><Icon name="dockLine" size={8} /></SideTab>
          <SideTab $h={11} aria-label="text"><Icon name="dockText" size={8} /></SideTab>
          <SideTab $h={11} aria-label="table"><Icon name="dockTable" size={8} /></SideTab>
          <SideAdd aria-label="add"><Icon name="plus" size={10} /></SideAdd>
        </SideTabs>
      </DockerMain>
    </Docker>
  );
}

function CornersDocker() {
  return (
    <Docker>
      <DockerHead><span>Углы</span><Icon name="collapse" size={8} /><Icon name="close" size={7} /></DockerHead>
      <DockerMain>
        <DockerBody $line>
          <CornerTop>
            <RadioList role="radiogroup">
              <RadioLabel><Radio type="radio" name="corner" defaultChecked /><span><u>С</u>кругление</span></RadioLabel>
              <RadioLabel><Radio type="radio" name="corner" /><span><u>В</u>ыемка</span></RadioLabel>
              <RadioLabel><Radio type="radio" name="corner" /><span><u>Ф</u>аска</span></RadioLabel>
            </RadioList>
            <Preview>
              <Svg width={46} height={46} viewBox="0 0 46 46" fill="none">
                <path d="M9 25V9h16" stroke="#000" strokeWidth="2" strokeDasharray="2 2" />
                <path d="M9 24v15M27 9h12" stroke="#000" strokeWidth="2" />
                <path d="M9 26C9 15 14 9 28 9" stroke="#e01818" strokeWidth="2" />
                <path d="M28 28L16 16M16 20v-4h4M27 22v-6q1-2 3-1" stroke="#2aa0d8" strokeWidth="1.300" />
              </Svg>
            </Preview>
          </CornerTop>
          <Rule />
          <Line $h={18}><FormLabel $w={30} htmlFor="radius">Радиус:</FormLabel><NumberField id="radius" value="0,4 мм" w={68} h={12} /></Line>
          <Line $h={8}>Длина фаски</Line>
          <Line $h={20}><FormLabel $w={30} $off htmlFor="lenA">A:</FormLabel><NumberField id="lenA" value="80,0 мм" w={68} h={14} off /><Icon name="bevelA" size={10} /></Line>
          <Line $h={18}><FormLabel $w={30} $off htmlFor="lenB">B:</FormLabel><NumberField id="lenB" value="80,0 мм" w={68} h={14} off /><Icon name="bevelB" size={10} /></Line>
          <Line $h={2} /><Rule />
          <Line $h={17} $align="flex-end"><PushButton $w={47} disabled>Применить</PushButton></Line>
          <Line $h={6} /><Rule />
          <Info><Icon name="info" size={7} /><span>В случае применения свойств угла к объекту, отличному от кривой, объект преобразуется в кривые.</span></Info>
        </DockerBody>
        <SideTabs>
          <SideTab $h={38} $active><Icon name="dockCorner" size={8} />Углы</SideTab>
          <SideAdd aria-label="add"><Icon name="plus" size={10} /></SideAdd>
        </SideTabs>
      </DockerMain>
    </Docker>
  );
}

export default function App() {
  return (
    <Page>
      <Global />
      <Window>
        <StandardBar />
        <Properties />
        <Body>
          <Toolbox>
            {toolGroups.map((g, gi) => (
              <React.Fragment key={gi}>
                {g.map((t) => <Tool key={t} aria-label={t} $active={t === "pick"}><Icon name={t} size={10} /></Tool>)}
                <ToolSep />
              </React.Fragment>
            ))}
            <Tool aria-label="add"><Icon name="plus" size={10} /></Tool>
          </Toolbox>
          <DocumentArea>
            <TabStrip>
              <HomeTab aria-label="home"><Icon name="home" size={8} /></HomeTab>
              <DocTab $w={77}>kids_names_metrika.cdr</DocTab>
              <DocTab $w={81} $active>Podstavka_pod_telefon..*</DocTab>
              <HomeTab aria-label="new tab"><Icon name="plus" size={9} /></HomeTab>
            </TabStrip>
            <RulerTop><HorizontalRuler /></RulerTop>
            <CanvasRow>
              <RulerLeft><VerticalRuler /></RulerLeft>
              <Canvas><Drawing /></Canvas>
              <VScroll>
                <VButton $w={8} aria-label="up"><Icon name="arrU" size={7} /></VButton>
                <Track /><VThumb />
                <VButton $w={8} aria-label="down"><Icon name="arrD" size={7} /></VButton>
              </VScroll>
            </CanvasRow>
            <PageBar>
              <PageNav>
                <PageNavButton aria-label="add page"><Icon name="addPage" size={8} /></PageNavButton>
                <PageNavButton aria-label="first"><Icon name="first" size={8} /></PageNavButton>
                <PageNavButton aria-label="previous"><Icon name="prev" size={8} /></PageNavButton>
                <PageCount>1 из 1</PageCount>
                <PageNavButton aria-label="next"><Icon name="next" size={8} /></PageNavButton>
                <PageNavButton aria-label="last"><Icon name="last" size={8} /></PageNavButton>
                <PageNavButton aria-label="add page after"><Icon name="addPage" size={8} /></PageNavButton>
                <PageTab>Страница 1</PageTab>
              </PageNav>
              <ScrollButton $w={12} aria-label="left"><Icon name="arrL" size={7} /></ScrollButton>
              <HThumb />
              <ScrollButton $w={12} aria-label="right"><Icon name="arrR" size={7} /></ScrollButton>
              <ScrollButton $w={8} aria-label="zoom"><Icon name="zoomI" size={8} /></ScrollButton>
            </PageBar>
            <ColorBar>
              <ColorBarButton aria-label="menu"><Icon name="flyout" size={8} /></ColorBarButton>
              <ColorBarButton aria-label="picker"><Icon name="picker" size={8} /></ColorBarButton>
              <ColorBarButton aria-label="back"><Icon name="chevL" size={8} /></ColorBarButton>
              <DocSwatch aria-label="none" $c="linear-gradient(135deg, #fff 44%, #d33 44%, #d33 56%, #fff 56%)" />
              <DocSwatch aria-label="black" $c="#000" />
              <DocSwatch aria-label="sand" $c="#f4cb95" />
            </ColorBar>
          </DocumentArea>
          <Palette>
            <PaletteTop><Icon name="flyout" size={8} /><Icon name="pickerGrey" size={8} /></PaletteTop>
            <Swatches>
              <SwatchColumn>{leftSwatches.map((c, i) => <Swatch key={i} aria-label={`color ${i}`} $c={c} />)}</SwatchColumn>
              <SwatchColumn>{rightSwatches.map((c, i) => <Swatch key={i} aria-label={`document color ${i}`} $c={c} />)}</SwatchColumn>
            </Swatches>
            <PaletteFoot><Icon name="chevR" size={7} /><Icon name="more" size={8} /></PaletteFoot>
          </Palette>
          <Dockers>
            <ContourDocker />
            <CornersDocker />
          </Dockers>
        </Body>
        <StatusBar>
          <Icon name="gear" size={10} />
          <StatusHint>Следующий щелчок - перетаскивание/масштабирование; второй щелчок - поворот/наклон; инструмент с двойным щелчком выбирает все объекты; Shift+щелчок - выбор нескольких элементов; Alt+щелчок - цифры</StatusHint>
          <StatusGroup $w={107}><Icon name="bucket" size={9} /><StatusSwatch $none />Нет</StatusGroup>
          <StatusGroup $w={134}><Icon name="pen" size={8} /><StatusSwatch />R:0 G:0 B:0 (#000000)&nbsp; 0,567 п</StatusGroup>
          <Icon name="monitor" size={10} />
        </StatusBar>
        <Progress><ProgressPart $w={27} $c="#7c1414" /><ProgressPart $w={31} $c="#303030" /></Progress>
      </Window>
      <Brand><BrandLetter>Д</BrandLetter></Brand>
    </Page>
  );
}
